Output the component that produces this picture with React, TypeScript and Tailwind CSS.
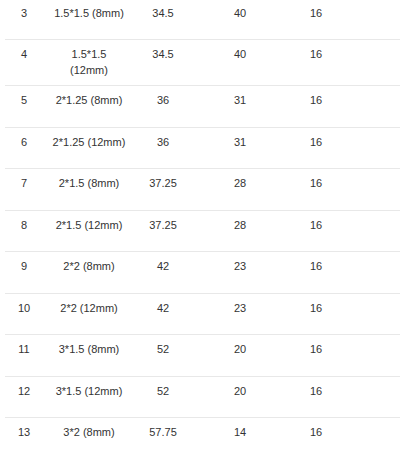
const rows = [
  { no: "3", size: ["1.5*1.5 (8mm)"], a: "34.5", b: "40", c: "16" },
  { no: "4", size: ["1.5*1.5", "(12mm)"], a: "34.5", b: "40", c: "16" },
  { no: "5", size: ["2*1.25 (8mm)"], a: "36", b: "31", c: "16" },
  { no: "6", size: ["2*1.25 (12mm)"], a: "36", b: "31", c: "16" },
  { no: "7", size: ["2*1.5 (8mm)"], a: "37.25", b: "28", c: "16" },
  { no: "8", size: ["2*1.5 (12mm)"], a: "37.25", b: "28", c: "16" },
  { no: "9", size: ["2*2 (8mm)"], a: "42", b: "23", c: "16" },
  { no: "10", size: ["2*2 (12mm)"], a: "42", b: "23", c: "16" },
  { no: "11", size: ["3*1.5 (8mm)"], a: "52", b: "20", c: "16" },
  { no: "12", size: ["3*1.5 (12mm)"], a: "52", b: "20", c: "16" },
  { no: "13", size: ["3*2 (8mm)"], a: "57.75", b: "14", c: "16" },
];

export default function App() {
  return (
    <div className="w-[400px] h-[457px] overflow-hidden bg-white">
      <div
        className="ml-[5px] -mt-[2.5px] text-[11px] leading-[16px] text-[#333]"
        style={{ fontFamily: '"Liberation Sans", Arial, sans-serif' }}
      >
        {rows.map((r) => (
          <div
            key={r.no}
            className="grid grid-cols-[38px_92px_56px_98px_54px_1fr] min-h-[41.5px] border-t border-[#e8e8e8] pt-[6px] pb-[7px] text-center"
          >
            <div>{r.no}</div>
            <div>
              {r.size.map((s) => (
                <div key={s}>{s}</div>
              ))}
            </div>
            <div>{r.a}</div>
            <div>{r.b}</div>
            <div>{r.c}</div>
            <div />
          </div>
        ))}
      </div>
    </div>
  );
}
